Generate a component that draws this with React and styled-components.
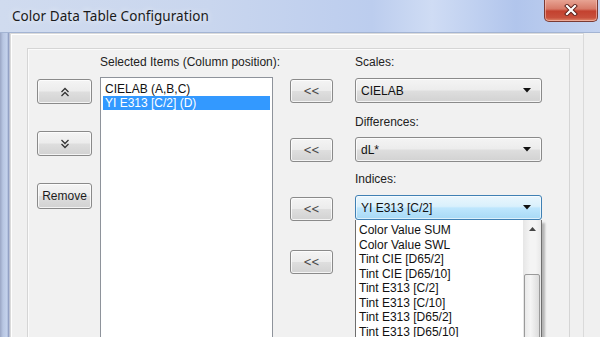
import React from "react";
import styled, { createGlobalStyle, css } from "styled-components";

const GlobalStyle = createGlobalStyle`
  html, body { margin: 0; padding: 0; background: #f0f0f0; }
  body { font-family: "Liberation Sans", Arial, sans-serif; }
`;

const Window = styled.div`
  width: 600px;
  height: 337px;
  overflow: hidden;
  display: flex;
  flex-direction: column;
  background: #f0f0f0;
`;

const TitleBar = styled.div`
  height: 33px;
  flex: none;
  display: flex;
  justify-content: space-between;
  align-items: flex-start;
  background: linear-gradient(90deg, #d0dbef 0%, #c9d6ee 35%, #bccdee 62%, #cfdcf4 72%, #b1c5ec 86%, #c4d3f0 100%);
  border-bottom: 1px solid #a3b4d3;
  box-sizing: border-box;
`;

const Title = styled.div`
  font-family: "Noto Sans", "Open Sans", sans-serif;
  font-size: 13.5px;
  color: #1a1a1a;
  margin: 7px 0 0 12px;
  text-shadow: 0 0 6px rgba(255,255,255,0.9);
  letter-spacing: 0.05px;
`;

const CloseButton = styled.div`
  width: 54px;
  height: 23px;
  margin: -1px 2px 0 0;
  box-sizing: border-box;
  border: 1px solid #7a3a33;
  border-top: none;
  border-radius: 0 0 5px 5px;
  background: linear-gradient(180deg, #e9a898 0%, #d77a68 45%, #c3412f 55%, #c8503c 85%, #e08a6e 100%);
  box-shadow: inset 0 0 0 1px rgba(255,210,200,0.5);
  display: flex;
  align-items: center;
  justify-content: center;
`;

const Body = styled.div`
  flex: 1;
  display: flex;
  min-height: 0;
  background: linear-gradient(90deg, #9aa6c4 0px, #b8c6e2 3px, #c4d2ec 7px, #8391b8 9px, #f0f0f0 10px);
  padding-left: 10px;
`;

const OuterBox = styled.div`
  flex: none;
  width: 574px;
  box-sizing: border-box;
  border: 1px solid #dadada;
  border-bottom: none;
  box-shadow: inset 1px 1px 0 #ffffff;
  background: #f0f0f0;
  padding: 14px 13px 0 16px;
  display: flex;
`;

const Panel = styled.div`
  flex: 1;
  border: 1px solid #d5d5d5;
  border-bottom: none;
  box-shadow: inset 1px 1px 0 #fbfbfb;
  background: #f1f1f1;
  display: flex;
  align-items: flex-start;
  overflow: hidden;
  font-size: 12px;
  color: #1c1c1c;
`;

const Column = styled.div`
  display: flex;
  flex-direction: column;
  align-items: stretch;
  flex: none;
  width: ${(p) => p.$w}px;
  margin-left: ${(p) => p.$ml}px;
  padding-top: ${(p) => p.$pt || 0}px;
`;

const buttonFace = css`
  box-sizing: border-box;
  border: 1px solid #8a8a8a;
  border-radius: 3px;
  background: linear-gradient(180deg, #f4f4f4 0%, #ececec 48%, #dedede 52%, #d2d2d2 100%);
  box-shadow: inset 0 0 0 1px rgba(255,255,255,0.75);
`;

const Button = styled.div`
  ${buttonFace};
  height: ${(p) => p.$h || 25}px;
  margin-top: ${(p) => p.$mt || 0}px;
  display: flex;
  align-items: center;
  justify-content: center;
  font-size: 12px;
  color: #1c1c1c;
`;

const Chevrons = styled.span`
  font-family: "DejaVu Sans", sans-serif;
  font-size: 12px;
  color: #4a4a4a;
  letter-spacing: -1px;
  transform: scaleX(0.85);
  margin-top: -1px;
`;

const Label = styled.div`
  height: 16px;
  line-height: 16px;
  margin-top: ${(p) => p.$mt || 0}px;
  white-space: nowrap;
  color: #222;
`;

const ListBox = styled.div`
  margin-top: 7px;
  height: 300px;
  box-sizing: border-box;
  border: 1px solid #8e939b;
  background: #fff;
  padding: 4px 2px 0;
`;

const ListItem = styled.div`
  height: 14px;
  line-height: 14px;
  padding-left: 2px;
  white-space: nowrap;
  ${(p) =>
    p.$selected
      ? css`
          background: #3399ff;
          color: #fff;
        `
      : css`
          color: #111;
        `}
`;

const Combo = styled.div`
  margin-top: ${(p) => p.$mt || 0}px;
  height: 25px;
  box-sizing: border-box;
  border-radius: 3px;
  display: flex;
  align-items: center;
  justify-content: space-between;
  padding: 0 10px 0 5px;
  ${(p) =>
    p.$focused
      ? css`
          border: 1px solid #3f80b4;
          background: linear-gradient(180deg, #eaf6fd 0%, #d9f0fc 45%, #bee6fd 52%, #a7d9f5 100%);
          box-shadow: inset 0 0 0 1px rgba(255,255,255,0.6);
        `
      : buttonFace}
`;

const ComboText = styled.span`
  color: #111;
`;

const DropList = styled.div`
  position: relative;
  height: 140px;
  box-sizing: border-box;
  border: 1px solid #6e6e6e;
  border-top: none;
  background: #fff;
  display: flex;
  box-shadow: 3px 3px 2px rgba(0,0,0,0.25);
`;

const DropItems = styled.div`
  flex: 1;
  padding: 3px 0 0 3px;
`;

const DropItem = styled.div`
  height: 14.5px;
  line-height: 14.5px;
  white-space: nowrap;
  color: #111;
`;

const ScrollBar = styled.div`
  width: 18px;
  flex: none;
  background: linear-gradient(90deg, #e6e6e6, #f4f4f4 40%, #f4f4f4 70%, #e8e8e8);
  display: flex;
  flex-direction: column;
  align-items: center;
`;

const ScrollArrow = styled.div`
  height: 17px;
  display: flex;
  align-items: center;
  justify-content: center;
  margin-top: 3px;
`;

const ScrollThumb = styled.div`
  margin-top: 39px;
  width: 16px;
  height: 120px;
  box-sizing: border-box;
  border: 1px solid #9a9a9a;
  border-radius: 2px;
  background: linear-gradient(90deg, #e9e9e9, #f5f5f5 40%, #dcdcdc 100%);
`;

const DoubleChevron = ({ down }) => (
  <svg width="10" height="10" viewBox="0 0 10 10">
    <g fill="none" stroke="#333" strokeWidth="1.3" transform={down ? "rotate(180 5 5)" : undefined}>
      <polyline points="1.5,5 5,1.5 8.5,5" />
      <polyline points="1.5,9 5,5.5 8.5,9" />
    </g>
  </svg>
);

const ArrowDown = () => (
  <svg width="8" height="5" viewBox="0 0 8 5">
    <polygon points="0,0 8,0 4,4.5" fill="#111" />
  </svg>
);

const ArrowUp = () => (
  <svg width="7" height="4" viewBox="0 0 7 4">
    <polygon points="0,4 7,4 3.5,0" fill="#444" />
  </svg>
);

const CloseX = () => (
  <svg width="14" height="12" viewBox="0 0 14 12">
    <g strokeLinecap="square">
      <path d="M3 2 L11 10 M11 2 L3 10" stroke="#5a1e18" strokeWidth="4" />
      <path d="M3 2 L11 10 M11 2 L3 10" stroke="#fff" strokeWidth="2.2" />
    </g>
  </svg>
);

const indices = [
  "Color Value SUM",
  "Color Value SWL",
  "Tint CIE [D65/2]",
  "Tint CIE [D65/10]",
  "Tint E313 [C/2]",
  "Tint E313 [C/10]",
  "Tint E313 [D65/2]",
  "Tint E313 [D65/10]",
];

export default function App() {
  return (
    <>
      <GlobalStyle />
      <Window>
        <TitleBar>
          <Title>Color Data Table Configuration</Title>
          <CloseButton>
            <CloseX />
          </CloseButton>
        </TitleBar>
        <Body>
          <OuterBox>
            <Panel>
              <Column $w={55} $ml={9} $pt={30}>
                <Button>
                  <DoubleChevron />
                </Button>
                <Button $mt={27}>
                  <DoubleChevron down />
                </Button>
                <Button $mt={27} $h={26}>Remove</Button>
              </Column>

              <Column $w={173} $ml={8}>
                <Label $mt={5}>Selected Items (Column position):</Label>
                <ListBox>
                  <ListItem>CIELAB (A,B,C)</ListItem>
                  <ListItem $selected>YI E313 [C/2] (D)</ListItem>
                </ListBox>
              </Column>

              <Column $w={43} $ml={17} $pt={30}>
                <Button $h={24}><Chevrons>&lt;&lt;</Chevrons></Button>
                <Button $h={24} $mt={35}><Chevrons>&lt;&lt;</Chevrons></Button>
                <Button $h={24} $mt={35}><Chevrons>&lt;&lt;</Chevrons></Button>
                <Button $h={24} $mt={29}><Chevrons>&lt;&lt;</Chevrons></Button>
              </Column>

              <Column $w={187} $ml={22}>
                <Label $mt={5}>Scales:</Label>
                <Combo $mt={8}>
                  <ComboText>CIELAB</ComboText>
                  <ArrowDown />
                </Combo>
                <Label $mt={11}>Differences:</Label>
                <Combo $mt={7}>
                  <ComboText>dL*</ComboText>
                  <ArrowDown />
                </Combo>
                <Label $mt={9}>Indices:</Label>
                <Combo $mt={8} $focused>
                  <ComboText>YI E313 [C/2]</ComboText>
                  <ArrowDown />
                </Combo>
                <DropList>
                  <DropItems>
                    {indices.map((t) => (
                      <DropItem key={t}>{t}</DropItem>
                    ))}
                  </DropItems>
                  <ScrollBar>
                    <ScrollArrow>
                      <ArrowUp />
                    </ScrollArrow>
                    <ScrollThumb />
                  </ScrollBar>
                </DropList>
              </Column>
            </Panel>
          </OuterBox>
        </Body>
      </Window>
    </>
  );
}
